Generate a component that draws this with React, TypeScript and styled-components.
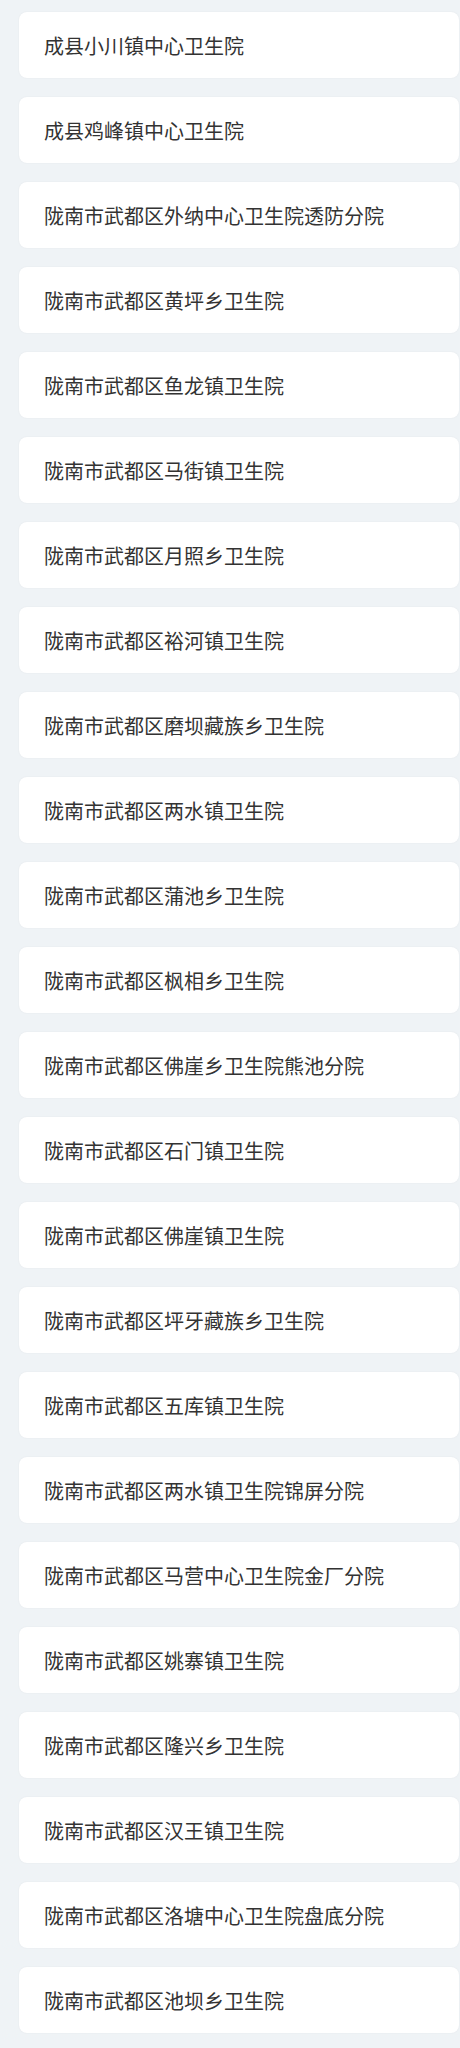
import styled, { createGlobalStyle } from "styled-components";

const GlobalStyle = createGlobalStyle`
  html, body {
    margin: 0;
    padding: 0;
    background: #eff3f6;
  }
  body {
    font-family: "Noto Sans CJK SC", "Noto Sans", sans-serif;
  }
`;

const List = styled.div`
  display: flex;
  flex-direction: column;
  gap: 19px;
  padding: 12px 1px 15px 19px;
`;

const Card = styled.div`
  height: 66px;
  display: flex;
  align-items: center;
  padding: 0 25px;
  background: #ffffff;
  border-radius: 8px;
  box-shadow: 0 0 2px rgba(0, 0, 0, 0.06);
  font-size: 20px;
  color: #333333;
  box-sizing: border-box;
`;

const hospitals = [
  "成县小川镇中心卫生院",
  "成县鸡峰镇中心卫生院",
  "陇南市武都区外纳中心卫生院透防分院",
  "陇南市武都区黄坪乡卫生院",
  "陇南市武都区鱼龙镇卫生院",
  "陇南市武都区马街镇卫生院",
  "陇南市武都区月照乡卫生院",
  "陇南市武都区裕河镇卫生院",
  "陇南市武都区磨坝藏族乡卫生院",
  "陇南市武都区两水镇卫生院",
  "陇南市武都区蒲池乡卫生院",
  "陇南市武都区枫相乡卫生院",
  "陇南市武都区佛崖乡卫生院熊池分院",
  "陇南市武都区石门镇卫生院",
  "陇南市武都区佛崖镇卫生院",
  "陇南市武都区坪牙藏族乡卫生院",
  "陇南市武都区五库镇卫生院",
  "陇南市武都区两水镇卫生院锦屏分院",
  "陇南市武都区马营中心卫生院金厂分院",
  "陇南市武都区姚寨镇卫生院",
  "陇南市武都区隆兴乡卫生院",
  "陇南市武都区汉王镇卫生院",
  "陇南市武都区洛塘中心卫生院盘底分院",
  "陇南市武都区池坝乡卫生院",
];

const App = () => {
  return (
    <>
      <GlobalStyle />
      <List>
        {hospitals.map((name, index) => (
          <Card key={index}>{name}</Card>
        ))}
      </List>
    </>
  );
};

export default App;
